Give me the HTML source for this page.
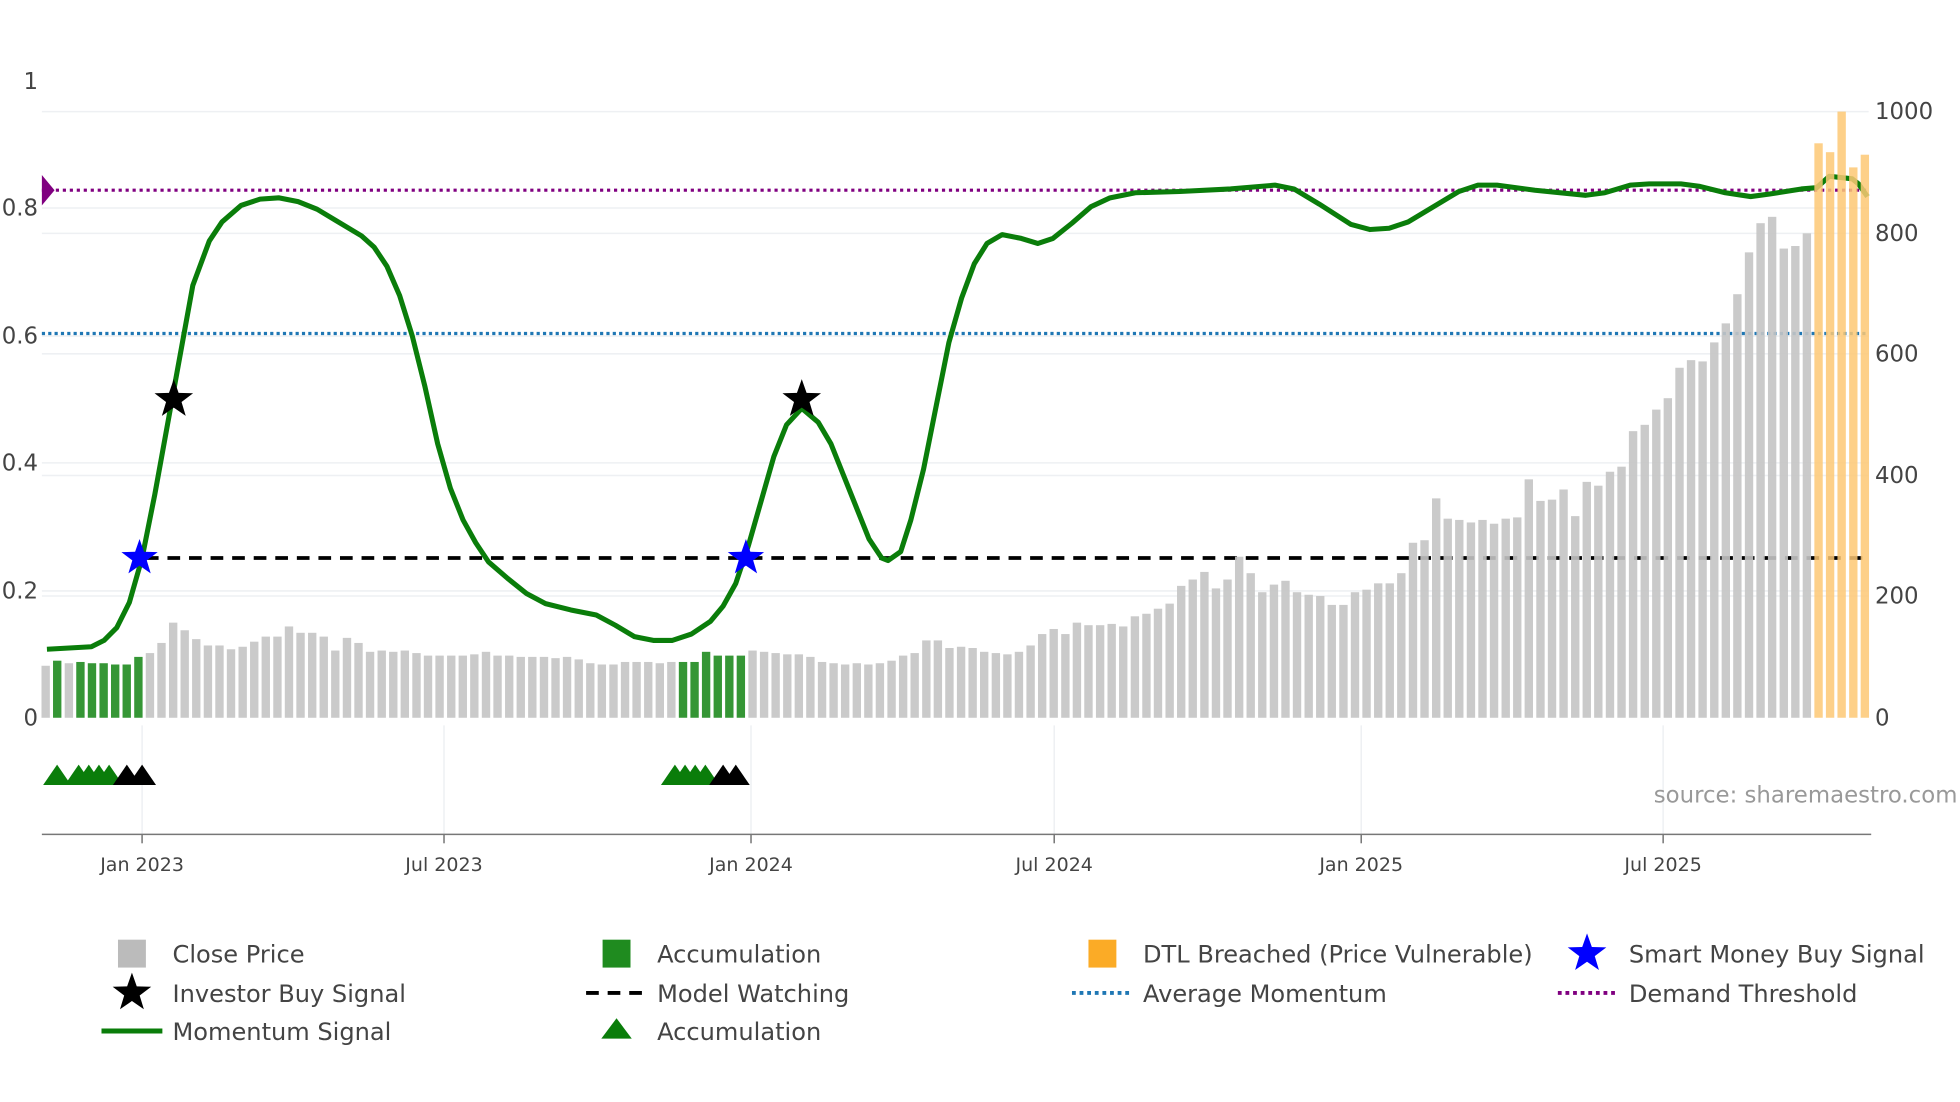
<!DOCTYPE html>
<html><head><meta charset="utf-8"><style>
html,body{margin:0;padding:0;background:#fff;width:1960px;height:1102px;overflow:hidden}
svg{display:block}
text{font-family:"DejaVu Sans","Liberation Sans",sans-serif;fill:#444}
</style></head><body>
<svg id="s" width="1960" height="1102" viewBox="0 0 1545 869" preserveAspectRatio="none" xmlns="http://www.w3.org/2000/svg">
<g stroke="#eef0f3" stroke-width="1.2">
<line x1="33" x2="1473" y1="88" y2="88"/><line x1="33" x2="1473" y1="164" y2="164"/><line x1="33" x2="1473" y1="184" y2="184"/>
<line x1="33" x2="1473" y1="265" y2="265"/><line x1="33" x2="1473" y1="279" y2="279"/><line x1="33" x2="1473" y1="365" y2="365"/>
<line x1="33" x2="1473" y1="375" y2="375"/><line x1="33" x2="1473" y1="466" y2="466"/><line x1="33" x2="1473" y1="470" y2="470"/>
<line x1="112" x2="112" y1="572" y2="658"/><line x1="350" x2="350" y1="572" y2="658"/><line x1="592" x2="592" y1="572" y2="658"/><line x1="831" x2="831" y1="572" y2="658"/><line x1="1073" x2="1073" y1="572" y2="658"/><line x1="1311" x2="1311" y1="572" y2="658"/>
</g>
<g font-size="18">
<text x="30" y="70" text-anchor="end">1</text>
<text x="30" y="170" text-anchor="end">0.8</text>
<text x="30" y="271" text-anchor="end">0.6</text>
<text x="30" y="371" text-anchor="end">0.4</text>
<text x="30" y="472" text-anchor="end">0.2</text>
<text x="30" y="572" text-anchor="end">0</text>
<text x="1478" y="94">1000</text>
<text x="1478" y="190">800</text>
<text x="1478" y="285">600</text>
<text x="1478" y="381">400</text>
<text x="1478" y="476">200</text>
<text x="1478" y="572">0</text>
</g>
<line x1="33" x2="1472" y1="263" y2="263" stroke="#1f77b4" stroke-width="2.5" stroke-dasharray="2.5,2.5"/>
<line x1="33" x2="1472" y1="150" y2="150" stroke="#800080" stroke-width="2.5" stroke-dasharray="2.5,3"/>
<path d="M33,138 L43,150 L33,162 Z" fill="#800080"/>
<line x1="115" x2="1472" y1="440" y2="440" stroke="#000" stroke-width="3" stroke-dasharray="10,7"/>
<path fill="none" stroke="#0a7d0a" stroke-width="4" stroke-linejoin="round" d="M37,512 L72,510 L82,505 L92,495 L102,475 L112,440 L122,390 L132,335 L142,280 L152,225 L165,190 L175,175 L190,162 L205,157 L220,156 L235,159 L250,165 L265,174 L285,186 L295,195 L305,210 L315,233 L325,265 L335,305 L345,350 L355,385 L365,410 L375,428 L385,443 L400,456 L415,468 L430,476 L450,481 L470,485 L485,493 L500,502 L515,505 L530,505 L545,500 L560,490 L570,478 L580,460 L590,430 L600,395 L610,360 L620,335 L632,322 L645,333 L655,350 L665,375 L675,400 L685,425 L695,440 L700,442 L710,435 L718,410 L728,370 L738,320 L748,270 L758,235 L768,208 L778,192 L790,185 L805,188 L818,192 L830,188 L845,176 L860,163 L875,156 L895,152 L930,151 L970,149 L1005,146 L1020,149 L1040,161 L1065,177 L1080,181 L1095,180 L1110,175 L1130,163 L1150,151 L1165,146 L1180,146 L1210,150 L1250,154 L1265,152 L1285,146 L1300,145 L1325,145 L1340,147 L1360,152 L1380,155 L1395,153 L1420,149 L1432,148 L1442,139 L1460,141 L1465,145 L1472,155"/>
<g id="bars"></g>
<g id="tri"></g>
<line x1="33" x2="1475" y1="658" y2="658" stroke="#777" stroke-width="1.2"/>
<g stroke="#777" stroke-width="1.2"><line x1="112" x2="112" y1="658" y2="665"/><line x1="350" x2="350" y1="658" y2="665"/><line x1="592" x2="592" y1="658" y2="665"/><line x1="831" x2="831" y1="658" y2="665"/><line x1="1073" x2="1073" y1="658" y2="665"/><line x1="1311" x2="1311" y1="658" y2="665"/></g>
<g font-size="15" text-anchor="middle">
<text x="112" y="687">Jan 2023</text><text x="350" y="687">Jul 2023</text><text x="592" y="687">Jan 2024</text><text x="831" y="687">Jul 2024</text><text x="1073" y="687">Jan 2025</text><text x="1311" y="687">Jul 2025</text>
</g>
<text x="1543" y="633" text-anchor="end" font-size="18" style="fill:#999">source: sharemaestro.com</text>
<g font-size="19">
<rect x="93" y="741" width="22" height="22" fill="#bbb"/><text x="136" y="759">Close Price</text>
<text x="136" y="790">Investor Buy Signal</text>
<line x1="80" x2="128" y1="813" y2="813" stroke="#0a7d0a" stroke-width="4"/><text x="136" y="820">Momentum Signal</text>
<rect x="475" y="741" width="22" height="22" fill="#1f8b1f"/><text x="518" y="759">Accumulation</text>
<line x1="462" x2="510" y1="783" y2="783" stroke="#000" stroke-width="3" stroke-dasharray="10,7"/><text x="518" y="790">Model Watching</text>
<path d="M474,819 L486,803 L498,819 Z" fill="#0a7d0a"/><text x="518" y="820">Accumulation</text>
<rect x="858" y="741" width="22" height="22" fill="#fbab26"/><text x="901" y="759">DTL Breached (Price Vulnerable)</text>
<line x1="845" x2="893" y1="783" y2="783" stroke="#1f77b4" stroke-width="3" stroke-dasharray="3,3"/><text x="901" y="790">Average Momentum</text>
<text x="1284" y="759">Smart Money Buy Signal</text>
<line x1="1228" x2="1276" y1="783" y2="783" stroke="#800080" stroke-width="3" stroke-dasharray="3,3"/><text x="1284" y="790">Demand Threshold</text>
</g>
<g id="stars"></g>
</svg>
<script>
var NS="http://www.w3.org/2000/svg";
var t=[525,521,523,522,523,523,524,524,518,515,507,491,497,504,509,509,512,510,506,502,502,494,499,499,502,513,503,507,514,513,514,513,515,517,517,517,517,516,514,517,517,518,518,518,519,518,520,523,524,524,522,522,522,523,522,522,522,514,517,517,517,513,514,515,516,516,518,522,523,524,523,524,523,521,517,515,505,505,511,510,511,514,515,516,514,509,500,496,500,491,493,493,492,494,486,484,480,476,462,457,451,464,457,439,452,467,461,458,467,469,470,477,477,467,465,460,460,452,428,426,393,409,410,412,410,413,409,408,378,395,394,386,407,380,383,372,368,340,335,323,314,290,284,285,270,255,232,199,176,171,196,194,184,113,120,88,132,122];
var N=t.length,st=1434/(N-1),g=document.getElementById('bars');
var green=[1,3,4,5,6,7,8,55,56,57,58,59,60];
for(var i=0;i<N;i++){var r=document.createElementNS(NS,'rect');var x=36+i*st;
r.setAttribute('x',(x-3.3).toFixed(1));r.setAttribute('width','6.6');r.setAttribute('y',t[i]);r.setAttribute('height',566-t[i]);
var c='#c4c4c4',o='0.9';if(green.indexOf(i)>=0){c='#1f8b1f';o='0.9'}if(i>=N-5){c='#fdc874';o='0.85'}
r.setAttribute('fill',c);r.setAttribute('fill-opacity',o);g.appendChild(r);}
function star(cx,cy,R,col){var p='';for(var k=0;k<10;k++){var a=-Math.PI/2+k*Math.PI/5;var rr=k%2?R*0.4:R;p+=(k?'L':'M')+(cx+rr*Math.cos(a)).toFixed(1)+','+(cy+rr*Math.sin(a)).toFixed(1);}
var e=document.createElementNS(NS,'path');e.setAttribute('d',p+'Z');e.setAttribute('fill',col);document.getElementById('stars').appendChild(e);}
star(137,315,16,'#000');star(632,315,16,'#000');star(110,440,15,'#0000ff');star(588,440,15,'#0000ff');
star(104,783,16,'#000');star(1251,752,16,'#0000ff');
function tri(cx,col){var e=document.createElementNS(NS,'path');e.setAttribute('d','M'+(cx-11)+',619 L'+cx+',603 L'+(cx+11)+',619Z');e.setAttribute('fill',col);document.getElementById('tri').appendChild(e);}
[45,62,70,78,86].forEach(function(x){tri(x,'#0a7d0a')});[100,112].forEach(function(x){tri(x,'#000')});
[532,540,548,556].forEach(function(x){tri(x,'#0a7d0a')});[570,580].forEach(function(x){tri(x,'#000')});
</script>
</body></html>
